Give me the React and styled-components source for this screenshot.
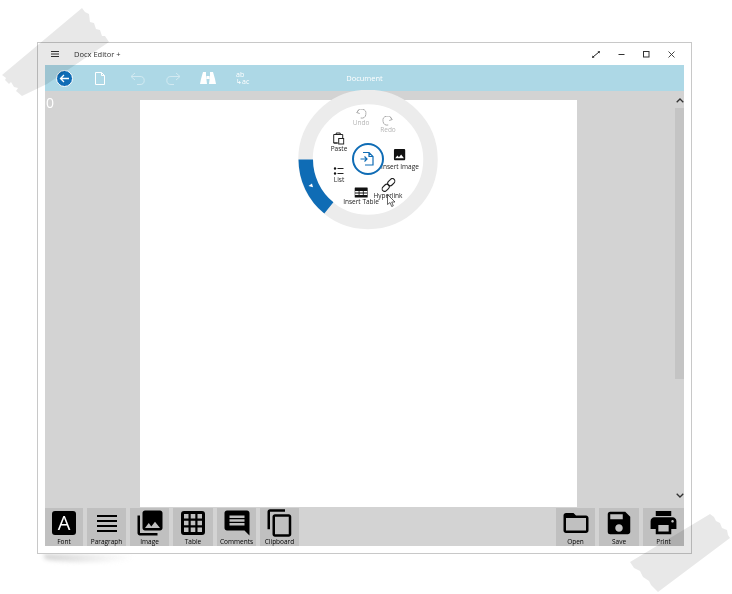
import React from "react";
import styled, { createGlobalStyle } from "styled-components";
import { MdPhotoLibrary, MdInsertComment, MdContentCopy, MdFolderOpen, MdSave, MdPrint, MdImage } from "react-icons/md";

const Global = createGlobalStyle`
  html, body { margin: 0; padding: 0; background: #fff; }
  body { font-family: "Open Sans", "Liberation Sans", sans-serif; width: 732px; height: 594px; overflow: hidden; }
`;
const Stage = styled.div`
  position: relative; width: 732px; height: 594px; padding: 42px 0 0 37px; box-sizing: border-box; filter: blur(0.35px);
`;
const Tape = styled.svg`
  position: absolute; z-index: 2; pointer-events: none;
  left: ${p => p.$x}px; top: ${p => p.$y}px;
`;
const Shadow = styled.div`
  position: absolute; left: 44px; top: 554px; width: 90px; height: 8px;
  background: linear-gradient(to right, #bbb, #eee 70%, #fff); border-radius: 0 0 60% 60%; filter: blur(2px); opacity: .65;
`;
const Win = styled.div`
  position: relative; width: 655px; height: 512px; box-sizing: border-box; border: 1px solid #c8c8c8; background: #fff;
  padding: 0 7px 7px; display: flex; flex-direction: column;
`;
const TitleBar = styled.div`
  height: 22px; display: flex; align-items: center; font-size: 7.5px; color: #333;
`;
const Burger = styled.svg`
  width: 8px; height: 6px; margin: 0 15px 0 6px;
`;
const Controls = styled.div`
  margin-left: auto; display: flex; align-items: center; gap: 0; margin-right: 0;
`;
const Ctl = styled.svg`
  width: 25px; height: 9px; display: block;
`;
const ToolBar = styled.div`
  height: 26px; background: #add8e6; display: flex; align-items: center; position: relative; padding-left: 11px;
`;
const BackBtn = styled.div`
  width: 17px; height: 17px; border-radius: 50%; background: #0f6cb5; border: 1px solid #fff; box-sizing: border-box;
  display: flex; align-items: center; justify-content: center;
`;
const ToolIcon = styled.svg`
  margin-left: ${p => p.$ml}px; display: block; flex: none;
`;
const Replace = styled.div`
  margin-left: 20px; width: 16px; font-size: 7px; line-height: 7px; color: #fff; white-space: pre;
`;
const DocTitle = styled.div`
  position: absolute; left: 0; right: 0; top: 0; bottom: 0; padding-left: 0; display: flex; align-items: center; justify-content: center;
  font-size: 7.5px; color: #fff;
`;
const Content = styled.div`
  position: relative; flex: 1; background: #d3d3d3; display: flex; justify-content: flex-start; padding: 9px 0 0 95px; min-height: 0;
`;
const Zero = styled.div`
  position: absolute; left: 1px; top: 3px; color: #fff; font-size: 14px; line-height: 18px;
`;
const Page = styled.div`
  width: 437px; background: #fff;
`;
const ScrollBar = styled.div`
  position: absolute; right: 0; top: 0; bottom: 0; width: 9px; display: flex; flex-direction: column; align-items: center;
`;
const Thumb = styled.div`
  width: 9px; height: 271px; background: #c4c4c4; margin-top: 5px;
`;
const Chevron = styled.svg`
  width: 8px; height: 5px; margin-top: ${p => p.$mt}px; display: block;
`;
const BottomBar = styled.div`
  height: 39px; background: #d3d3d3; display: flex; gap: 4px; padding-top: 1px; box-sizing: border-box;
`;
const Spacer = styled.div`flex: 1;`;
const Tile = styled.div`
  width: ${p => p.$w || 39}px; height: 38px; background: #c0c0c0; display: flex; flex-direction: column; align-items: center; color: #000;
  font-size: 6.5px; line-height: 9px; position: relative;
`;
const IconWrap = styled.div`
  height: 29px; display: flex; align-items: center; justify-content: center;
  svg { display: block; }
`;
const FontIcon = styled.div`
  width: 24px; height: 24px; background: #000; color: #fff; border-radius: 3px; font-size: 20px; line-height: 24px; text-align: center;
`;
const Radial = styled.div`
  position: absolute; left: 298px; top: 90px; width: 140px; height: 140px; z-index: 1;
`;
const RadialRing = styled.svg`
  position: absolute; left: 0; top: 0; display: block;
`;
const RItem = styled.div`
  position: absolute; left: ${p => p.$x}px; top: ${p => p.$y}px; transform: translateX(-50%); display: flex; flex-direction: column; align-items: center;
  font-size: 6.5px; line-height: 8px; color: ${p => (p.$off ? "#b5b5b5" : "#222")}; white-space: nowrap;
  svg { display: block; }
`;
const Center = styled.div`
  position: absolute; left: 54px; top: 53px; width: 32px; height: 32px; box-sizing: border-box; border: 2px solid #0f6cb5; border-radius: 50%;
  display: flex; align-items: center; justify-content: center;
`;
const Cursor = styled.svg`
  position: absolute; left: 89px; top: 104px;
`;

const tapeA = "M0 75 L4 78 L3 80 L7 84 L9 82 L12 87 L16 88 L14 91 L20 96 L45 84 L107 42 L103 36 L100 36 L98 30 L94 29 L92 23 L88 22 L87 14 L83 12 L80 8 Z";

export default function App() {
  return (
    <Stage>
      <Global />
      <Shadow />
      <Win>
        <TitleBar>
          <Burger viewBox="0 0 8 6"><path d="M0 .5h8M0 3h8M0 5.5h8" stroke="#333" strokeWidth="1" /></Burger>
          <span>Docx Editor +</span>
          <Controls>
            <Ctl viewBox="0 0 25 9"><path d="M9 7 L15 2" stroke="#222" strokeWidth="1" /><path d="M8 8l2.5-.5-2-2zM16 1l-2.500.5 2 2z" fill="#222" /></Ctl>
            <Ctl viewBox="0 0 25 9"><path d="M9.500 4.500h6" stroke="#333" strokeWidth="1" /></Ctl>
            <Ctl viewBox="0 0 25 9"><rect x="9.500" y="1.500" width="5.500" height="5.500" fill="none" stroke="#333" strokeWidth="1" /></Ctl>
            <Ctl viewBox="0 0 25 9"><path d="M9.500 1.500l6 6m0-6l-6 6" stroke="#333" strokeWidth=".9" /></Ctl>
          </Controls>
        </TitleBar>
        <ToolBar>
          <DocTitle>Document</DocTitle>
          <BackBtn>
            <svg width="11" height="11" viewBox="0 0 11 11"><path d="M10 5.500H1.500M5 2L1.500 5.500 5 9" fill="none" stroke="#fff" strokeWidth="1.300" /></svg>
          </BackBtn>
          <ToolIcon $ml={22} width="10" height="13" viewBox="0 0 10 13"><path d="M.5.500h6l3 3v9h-9zM6.500.500v3h3" fill="none" stroke="#fff" strokeWidth="1" /></ToolIcon>
          <ToolIcon $ml={25} width="16" height="13" viewBox="0 0 16 13" style={{opacity:.45}}><path d="M5 1L1 4.500 5 8M1 4.500h9a4.200 4 0 0 1 0 8H7" fill="none" stroke="#fff" strokeWidth="1" /></ToolIcon>
          <ToolIcon $ml={19} width="16" height="13" viewBox="0 0 16 13" style={{opacity:.45}}><path d="M11 1l4 3.500L11 8M15 4.500H6a4.200 4 0 0 0 0 8h3" fill="none" stroke="#fff" strokeWidth="1" /></ToolIcon>
          <ToolIcon $ml={19} width="16" height="14" viewBox="0 0 16 14"><path d="M3 1h3v4l1 8H0l1-5zM13 1h-3v4l-1 8h7l-1-5zM6.500 5h3v3h-3z" fill="#fff" /></ToolIcon>
          <Replace>{"ab\n↳ac"}</Replace>
        </ToolBar>
        <Content>
          <Zero>0</Zero>
          <Page />
          <ScrollBar>
            <Chevron $mt={7} viewBox="0 0 8 5"><path d="M.7 4.300L4 1l3.300 3.300" fill="none" stroke="#333" strokeWidth="1.300" /></Chevron>
            <Thumb />
            <Spacer />
            <Chevron $mt={0} style={{marginBottom: 9}} viewBox="0 0 8 5"><path d="M.7.700L4 4 7.300.700" fill="none" stroke="#333" strokeWidth="1.300" /></Chevron>
          </ScrollBar>
        </Content>
        <BottomBar>
          <Tile $w={38}><IconWrap><FontIcon>A</FontIcon></IconWrap>Font</Tile>
          <Tile><IconWrap><svg width="22" height="20" viewBox="0 0 22 20"><path d="M1 3h20M1 8h20M1 13h20M1 18h20" stroke="#000" strokeWidth="2" /></svg></IconWrap>Paragraph</Tile>
          <Tile><IconWrap><MdPhotoLibrary size={30} /></IconWrap>Image</Tile>
          <Tile $w={40}><IconWrap><svg width="24" height="24" viewBox="0 0 24 24"><path fillRule="evenodd" d="M3 0h18a3 3 0 0 1 3 3v18a3 3 0 0 1-3 3H3a3 3 0 0 1-3-3V3a3 3 0 0 1 3-3zM3 3v4.500h4.500V3zM9.700 3v4.500h4.600V3zM16.500 3v4.500H21V3zM3 9.700v4.600h4.500V9.700zM9.700 9.700v4.600h4.600V9.700zM16.500 9.700v4.600H21V9.700zM3 16.500V21h4.500v-4.500zM9.700 16.500V21h4.600v-4.500zM16.500 16.500V21H21v-4.500z" /></svg></IconWrap>Table</Tile>
          <Tile><IconWrap><MdInsertComment size={30} style={{transform:"scaleY(-1) scaleY(-1)"}} /></IconWrap>Comments</Tile>
          <Tile><IconWrap><MdContentCopy size={30} /></IconWrap>Clipboard</Tile>
          <Spacer />
          <Tile><IconWrap><MdFolderOpen size={30} /></IconWrap>Open</Tile>
          <Tile $w={40}><IconWrap><MdSave size={30} /></IconWrap>Save</Tile>
          <Tile $w={41}><IconWrap><MdPrint size={31} /></IconWrap>Print</Tile>
        </BottomBar>
      </Win>
      <Radial>
        <RadialRing width="140" height="140" viewBox="0 0 140 140">
          <circle cx="70" cy="69.500" r="62.500" fill="#fff" stroke="#ececec" strokeWidth="14.500" />
          <path d="M.5 69.500H15A55 55 0 0 0 35.400 112.200L26.300 123.500A69.500 69.500 0 0 1 .5 69.500Z" fill="#0f6cb5" />
          <path d="M14 93.500l-3.500 2.500 4.500 1.200z" fill="#fff" />
        </RadialRing>
        <RItem $x={63} $y={19} $off>
          <svg width="11" height="10" viewBox="0 0 11 10"><path d="M3 1L1 3.500l3 1M1.500 3.300A4.500 4.500 0 1 1 5 9" fill="none" stroke="#aaa" strokeWidth="1" /></svg>
          Undo
        </RItem>
        <RItem $x={90} $y={26} $off>
          <svg width="11" height="10" viewBox="0 0 11 10"><path d="M8 1l2 2.500-3 1M9.500 3.300A4.500 4.500 0 1 0 6 9" fill="none" stroke="#aaa" strokeWidth="1" /></svg>
          Redo
        </RItem>
        <RItem $x={41} $y={42}>
          <svg width="12" height="13" viewBox="0 0 12 13"><path d="M1 2.500h9v4M5 11H1zM1 2.500V11M3.500 2.500V1h4v1.500" fill="none" stroke="#222" strokeWidth="1" /><rect x="6" y="6.500" width="5" height="5.500" fill="none" stroke="#222" strokeWidth="1" /></svg>
          Paste
        </RItem>
        <RItem $x={102} $y={57}>
          <MdImage size={15} color="#111" style={{margin:"0 0 1px"}} />
          Insert Image
        </RItem>
        <RItem $x={41} $y={76}>
          <svg width="11" height="10" viewBox="0 0 11 10"><path d="M4 2.500h6M4 7.500h6" stroke="#222" strokeWidth="1" /><circle cx="1.500" cy="2.500" r="1.200" fill="#111" /><circle cx="1.500" cy="7.500" r="1.200" fill="#111" /></svg>
          List
        </RItem>
        <RItem $x={90} $y={88}>
          <svg width="14" height="14" viewBox="0 0 14 14"><g transform="rotate(-45 7 7)" fill="none" stroke="#222" strokeWidth="1.100"><rect x="-1" y="4.500" width="8" height="5" rx="2.500" /><rect x="7" y="4.500" width="8" height="5" rx="2.500" /></g></svg>
          Hyperlink
        </RItem>
        <RItem $x={63} $y={97}>
          <svg width="14" height="11" viewBox="0 0 14 11"><path fillRule="evenodd" fill="#111" d="M1 .5h12a.5.500 0 0 1 .5.500v9a.5.500 0 0 1-.5.500H1a.5.500 0 0 1-.5-.500V1A.5.500 0 0 1 1 .5zM1 4v1.600h3.500V4zM5.300 4v1.600h3.400V4zM9.500 4v1.600H13V4zM1 6.500v1.500h3.500V6.500zM5.300 6.500v1.500h3.400V6.500zM9.500 6.500v1.500H13V6.500z" /></svg>
          Insert Table
        </RItem>
        <Center>
          <svg width="20" height="20" viewBox="0 0 20 20"><path d="M5 3.500h6l4 4V16H7M11 3.500v4h4M2.500 10H9M6.500 7.500L9 10l-2.500 2.500" fill="none" stroke="#0f6cb5" strokeWidth="1.200" /></svg>
        </Center>
        <Cursor width="9" height="13" viewBox="0 0 9 13"><path d="M.5.500v10l2.500-2 1.700 4 1.600-.7-1.600-3.800H8z" fill="#fff" stroke="#222" strokeWidth=".7" /></Cursor>
      </Radial>
      <Tape $x={2} $y={0} width="110" height="100" viewBox="0 0 110 100">
        <path d={tapeA} fill="#000" opacity=".09" />
      </Tape>
      <Tape $x={628} $y={512} width="104" height="82" viewBox="0 0 104 82">
        <path d="M2 50L82 2l4 3 2 4 4 2 2 5 5 2 1 5 2 3L30 80l-7-7-2-4-6-4-3-6-6-3z" fill="#000" opacity=".09" />
      </Tape>
    </Stage>
  );
}
